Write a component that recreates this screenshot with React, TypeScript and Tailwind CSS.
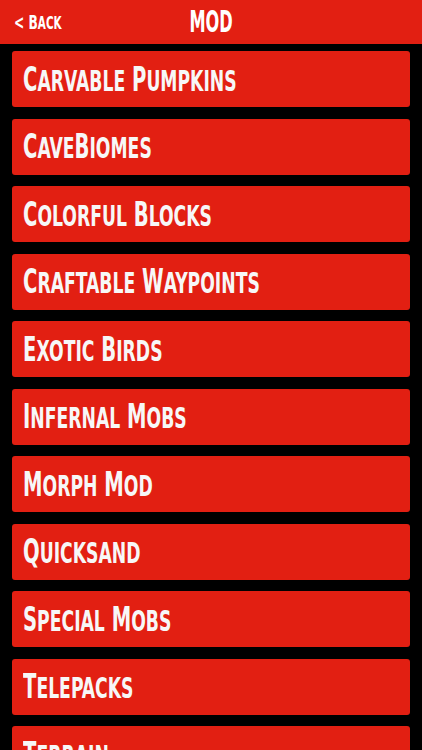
import React from "react";

const items = [
  "Carvable Pumpkins",
  "CaveBiomes",
  "Colorful Blocks",
  "Craftable Waypoints",
  "Exotic Birds",
  "Infernal Mobs",
  "Morph Mod",
  "Quicksand",
  "Special Mobs",
  "Telepacks",
  "Terrain",
];

function runs(text: string) {
  const out: { big: boolean; s: string }[] = [];
  for (const ch of text) {
    const big = ch !== ch.toLowerCase() || ch === "<" || ch === " ";
    const last = out[out.length - 1];
    if (last && last.big === big) last.s += ch;
    else out.push({ big, s: ch });
  }
  return out;
}

function SC({ text, big, small }: { text: string; big: string; small: string }) {
  return (
    <>
      {runs(text).map((r, i) => (
        <span key={i} className={r.big ? big : small}>
          {r.s.toUpperCase()}
        </span>
      ))}
    </>
  );
}

const font = { fontFamily: '"Liberation Sans Narrow", "DejaVu Sans Condensed", "Liberation Sans", sans-serif' };

export default function App() {
  return (
    <div className="min-h-[750px] w-[422px] bg-black" style={font}>
      <div className="relative flex h-[44px] items-center justify-center bg-[#e21f12]">
        <div className="absolute left-[14px] top-0 flex h-full items-center font-bold leading-none text-white">
          <span className="inline-block origin-left scale-x-[0.68] whitespace-nowrap">
            <SC text="< Back" big="text-[20px]" small="text-[17px]" />
          </span>
        </div>
        <span className="inline-block scale-x-[0.6] text-[30px] font-bold leading-none text-white">MOD</span>
      </div>
      <div className="flex flex-col gap-[11.5px] px-3 pt-[7px]">
        {items.map((t) => (
          <div key={t} className="flex h-[56px] items-center rounded-[3px] bg-[#e21f12] pl-[11px]">
            <span className="inline-block origin-left scale-x-[0.66] whitespace-nowrap font-bold leading-none text-[#f7f7f7]">
              <SC text={t} big="text-[33px]" small="text-[29px]" />
            </span>
          </div>
        ))}
      </div>
    </div>
  );
}
